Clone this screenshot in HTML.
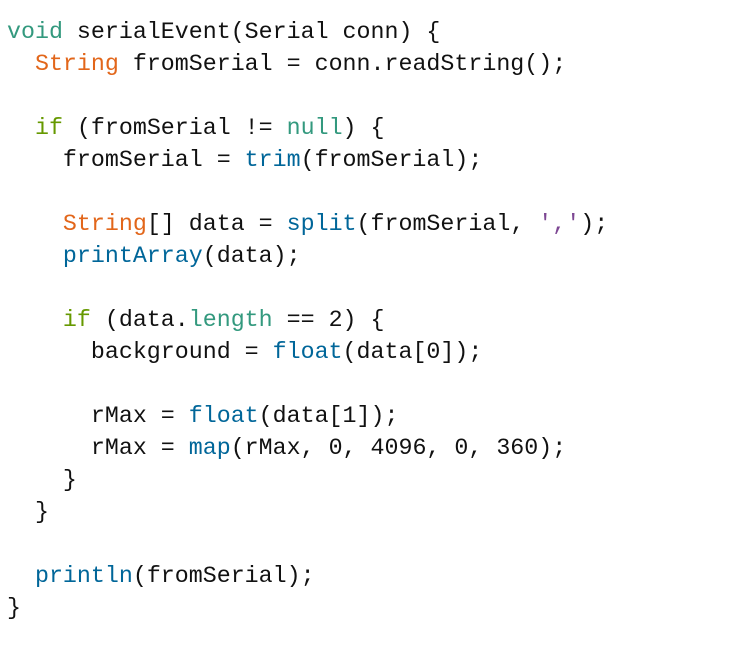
<!DOCTYPE html>
<html><head><meta charset="utf-8"><style>
html,body{margin:0;padding:0;background:#fff;width:754px;height:646px;overflow:hidden}
pre{margin:0;padding:16px 0 0 7px;font-family:"Liberation Mono","DejaVu Sans Mono",monospace;font-size:23.3px;line-height:32px;color:#111}
.k{color:#33997e}.t{color:#e2661a}.c{color:#669900}.f{color:#006699}.s{color:#7d4793}
</style></head><body><pre><span class="k">void</span> serialEvent(Serial conn) {
  <span class="t">String</span> fromSerial = conn.readString();

  <span class="c">if</span> (fromSerial != <span class="k">null</span>) {
    fromSerial = <span class="f">trim</span>(fromSerial);

    <span class="t">String</span>[] data = <span class="f">split</span>(fromSerial, <span class="s">','</span>);
    <span class="f">printArray</span>(data);

    <span class="c">if</span> (data.<span class="k">length</span> == 2) {
      background = <span class="f">float</span>(data[0]);

      rMax = <span class="f">float</span>(data[1]);
      rMax = <span class="f">map</span>(rMax, 0, 4096, 0, 360);
    }
  }

  <span class="f">println</span>(fromSerial);
}</pre></body></html>
